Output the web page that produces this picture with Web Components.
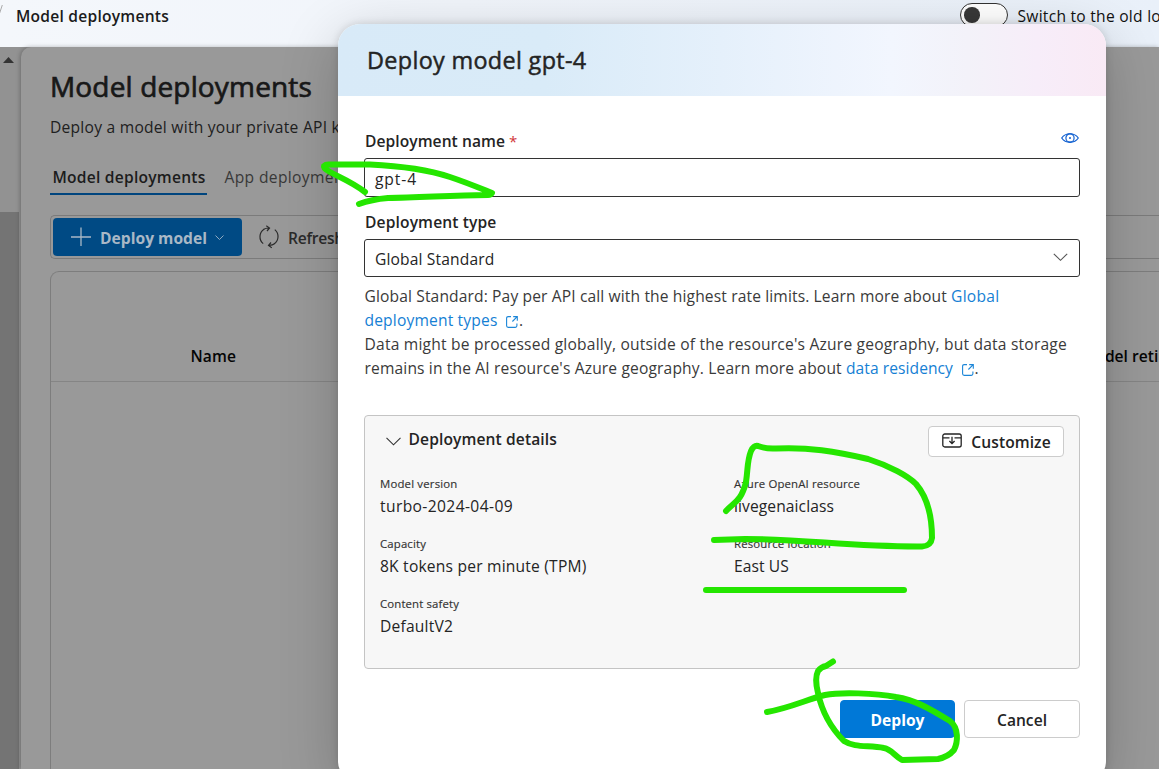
<!DOCTYPE html>
<html lang="en">
<head>
<meta charset="utf-8">
<title>Model deployments</title>
<style>
html,body{margin:0;height:100%;overflow:hidden}
body{font-family:"Open Sans","Noto Sans",sans-serif;font-size:15.6px;color:#242424}
</style>
</head>
<body>
<deployments-app></deployments-app>
<script>
function define(name, html, setup) {
  const t = document.createElement('template');
  t.innerHTML = html;
  customElements.define(name, class extends HTMLElement {
    constructor() {
      super();
      this.attachShadow({mode: 'open'}).append(t.content.cloneNode(true));
    }
    connectedCallback() { if (setup) setup(this, this.shadowRoot); }
  });
}

/* One line of text tracked to a given width. */
define('fit-text', `<style>
:host{display:inline-block;white-space:nowrap}
span{display:inline-block}
</style><span><slot></slot></span>`, (el, root) => {
  const s = root.querySelector('span');
  requestAnimationFrame(() => {
    s.style.letterSpacing = '0';
    const n = el.textContent.length, w = +el.getAttribute('w');
    const d = (w - s.getBoundingClientRect().width) / n;
    s.style.letterSpacing = d.toFixed(3) + 'px';
  });
});

define('ui-switch', `<style>
:host{display:block;box-sizing:border-box;width:48px;height:24px;border:1.3px solid #333;border-radius:12px;background:#fff;padding:3px}
i{display:block;width:15.5px;height:15.5px;border-radius:50%;background:#383838}
</style><i></i>`);

define('app-header', `<style>
:host{display:flex;height:47px;background:linear-gradient(90deg,#f4f7fb,#f1f5fb 40%,#e9f0f9);line-height:32px;color:#1b1b1b;overflow:hidden}
.c{width:16px}
.c svg{display:block;margin-top:5px}
.t{font-weight:600;flex:1}
ui-switch{margin:3px 9.500px 0 0}
.s{width:141.500px;color:#111}
</style>
<div class="c"><svg width="3" height="9" fill="none" stroke="#aaa"><path d="M2.300 0L-.5 8.500"/></svg></div><div class="t"><fit-text w="153">Model deployments</fit-text></div>
<ui-switch></ui-switch><div class="s"><fit-text w="143.500">Switch to the old lo</fit-text></div>`);

define('scroll-rail', `<style>
:host{display:flex;flex-direction:column;width:21px;background:#929292}
svg{display:block;margin:10px 0 0 3px;flex:none}
i{width:19px;margin-top:149px;background:#747474;flex:1}
</style><svg width="11" height="6"><path d="M0 6L5.5 0L11 6Z" fill="#333"/></svg><i></i>`);

define('page-tabs', `<style>
:host{display:flex;gap:18px;line-height:34px;height:35px;color:#383838}
.a{font-weight:600;color:#1c1c1c;width:152.500px;padding:0 2px;height:33px;border-bottom:2px solid #00457e;white-space:nowrap}
.a fit-text{margin-left:.5px}
</style><div class="a"><fit-text w="153">Model deployments</fit-text></div><fit-text w="133">App deployments</fit-text>`);

define('page-toolbar', `<style>
:host{display:flex;box-sizing:border-box;height:44px;border:1px solid #7b7b7b;border-right:0;border-radius:5px 0 0 5px;padding:2px;font-weight:600;line-height:40px;color:#2b2b2b}
.b{display:flex;box-sizing:border-box;width:189px;height:38px;background:#004a84;border-radius:4px;color:#a9b8c6;padding-left:18px;font-weight:700}
.b svg:first-child{margin:9px 9px 0 0}.b svg:last-child{margin:17px 0 0 8px}
.r{margin:7px 9px 0 17px}
</style>
<div class="b"><svg width="20" height="20" fill="none" stroke="#a9b8c6" stroke-width="1.3"><path d="M10 0.5V19M0 10H20"/></svg><fit-text w="107">Deploy model</fit-text><svg width="9" height="6" fill="none" stroke="#8fa9c0"><path d="M.5 .5L4.5 4.5L8.5 .5"/></svg></div>
<svg class="r" width="20" height="24" viewBox="0 0 20 24" fill="none" stroke="#2b2b2b" stroke-width="1.2"><path d="M5 4.2A9 9 0 0 0 4.2 18.6M15 19A9 9 0 0 0 15.8 4.6M4.500 4.500Q6.500 2.800 10.500 3M7.300 .8L10.500 3L8 6M15.500 18.700Q13.500 20.500 9.500 20.300M12 17.500L9.500 20.300L12.800 22.900"/></svg>
<fit-text w="56">Refresh</fit-text>`);

define('page-table', `<style>
:host{display:block;flex:1;box-sizing:border-box;border:1px solid #7d7d7d;border-width:1px 0 0 1px;border-radius:9px 0 0 0;margin-top:12px}
.h{display:flex;box-sizing:border-box;height:110px;border-bottom:1px solid #858585;padding:67px 0 0 139.500px;line-height:34px;font-weight:600;color:#050505}
.n{width:890.500px;flex:none}
</style><div class="h"><div class="n"><fit-text w="45.500">Name</fit-text></div><fit-text w="84">Model retir</fit-text></div>`);

define('page-panel', `<style>
:host{display:flex;flex:1;flex-direction:column;min-width:0;background:#999;border-radius:10px 0 0 0;padding:18px 0 0 29px;box-shadow:-1px 0 4px rgba(0,0,0,.25);overflow:hidden}
h1{font-weight:400;-webkit-text-stroke:.7px;font-size:28px;line-height:42px;margin:0;color:#181818}
p{margin:4px 0 17px;line-height:32px;color:#202020;height:32px}
page-toolbar{margin-top:20px}
</style><h1><fit-text w="262">Model deployments</fit-text></h1>
<p><fit-text w="290">Deploy a model with your private API k</fit-text></p>
<page-tabs></page-tabs><page-toolbar></page-toolbar><page-table></page-table>`);

define('ui-field', `<style>
:host{display:block}
.l{display:flex;justify-content:space-between;font-weight:600;line-height:34px;height:34px;padding-left:1px}
.b{display:flex;justify-content:space-between;box-sizing:border-box;height:var(--h,39px);line-height:var(--lh,41px);border:1px solid #333;border-radius:3px;padding:0 11px 0 10px}
</style><div class="l"><span><slot name="label"></slot></span><slot name="extra"></slot></div><div class="b"><slot></slot></div>`);

define('ui-button', `<style>
:host{display:flex;justify-content:center;box-sizing:border-box;border:1px solid #ccc;border-radius:4px;background:#fff;font-weight:600}
:host([primary]){background:#0078d7;border-color:#0078d7;color:#fff;font-weight:700}
</style><slot></slot>`);

define('ext-icon', `<style>:host{display:inline-block;vertical-align:-1.500px;width:12px;height:12px;margin:0 1px 0 8.500px}svg{display:block}</style>
<svg width="12" height="12" fill="none" stroke="#1c86d8" stroke-width="1.1"><path d="M5 .6H2.2Q.6 .6 .6 2.2V9.8Q.6 11.4 2.2 11.4H9.3Q10.9 11.4 10.9 9.8V7.5M7.2 .6H11.3V4.8M11.2 .7L6.4 5.5"/></svg>`);

define('detail-item', `<style>
:host{display:block;height:60px}
.k{font-size:11.4px;line-height:18px;height:18px;color:#333;-webkit-text-stroke:.15px}
.v{line-height:26px;height:26px}
</style><div class="k"><slot name="k"></slot></div><div class="v"><slot></slot></div>`);

define('deployment-details', `<style>
:host{display:block;box-sizing:border-box;height:254px;border:1px solid #c4c4c4;border-radius:4px;background:#f7f7f7;padding:10px 15px}
.h{display:flex;height:49px;line-height:26px;font-weight:600}
.h>svg{margin:11px 7.500px 0 6px}
ui-button{width:136px;height:31px;line-height:30px;margin-left:auto}
ui-button svg{margin:6px 9px 0 1px}
.g{display:grid;grid-template-columns:354px 1fr}
</style>
<div class="h"><svg width="15" height="9" fill="none" stroke="#333" stroke-width="1.1"><path d="M.5 .8L7.5 7.8L14.5 .8"/></svg><fit-text w="148.500">Deployment details</fit-text>
<ui-button><svg width="20" height="16" fill="none" stroke="#242424" stroke-width="1.3"><rect x=".8" y="1" width="18.4" height="13" rx="2"/><path d="M1 4.800H7.500M12.500 4.800H19M10 3.800V10.500M7.400 8L10 10.600L12.600 8"/></svg><fit-text w="79.500">Customize</fit-text></ui-button></div>
<div class="g">
<detail-item><fit-text slot="k" w="77.500">Model version</fit-text><fit-text w="133">turbo-2024-04-09</fit-text></detail-item>
<detail-item><fit-text slot="k" w="126">Azure OpenAI resource</fit-text><fit-text w="100">livegenaiclass</fit-text></detail-item>
<detail-item><fit-text slot="k" w="46">Capacity</fit-text><fit-text w="206.500">8K tokens per minute (TPM)</fit-text></detail-item>
<detail-item><fit-text slot="k" w="97">Resource location</fit-text><fit-text w="55">East US</fit-text></detail-item>
<detail-item><fit-text slot="k" w="79">Content safety</fit-text><fit-text w="73">DefaultV2</fit-text></detail-item>
</div>`);

define('deploy-dialog', `<style>
:host{display:block;box-sizing:border-box;width:768px;height:759px;border-radius:22px;background:#fff;overflow:hidden;box-shadow:0 0 8px rgba(0,0,0,.14),0 14px 60px rgba(0,0,0,.2)}
header{height:72px;box-sizing:border-box;padding:18px 29px;line-height:37px;font-size:23.4px;-webkit-text-stroke:.45px;background:linear-gradient(90deg,#d8eaf8 0,#d9ebf8 27%,#e5f0fb 50%,#f2f6fe 72%,#f3f2f9 82%,#f7edf9 91%,#f9eaf5)}
main{padding:28px 26px 0}
.red{color:#d13438;font-weight:400;margin-left:4px;font-size:15px}
.desc{padding-left:.5px;line-height:24px;height:96px;margin:7px 0 35px;color:#3a3a3a;white-space:nowrap}
.desc div{height:24px}
.desc fit-text{white-space:pre}
a{color:#1580d4}
.eye{margin:9px 1px 0 0}
.type{--h:38px;--lh:39px;margin-top:8px}
.chev{margin-top:13px}
footer{display:flex;justify-content:flex-end;gap:9px;margin-top:31px;line-height:38px}
footer ui-button{width:116px;height:38px}footer ui-button[primary]{width:115px}
</style>
<header><fit-text w="219.500">Deploy model gpt-4</fit-text></header>
<main>
<ui-field><span slot="label"><fit-text w="140">Deployment name</fit-text><span class="red">*</span></span>
<svg class="eye" slot="extra" width="18" height="10" viewBox="0 0 18 10" fill="none" stroke="#0f5fd0" stroke-width="1.2"><path d="M.7 5C4.5-.7 13.5-.7 17.3 5C13.5 10.7 4.5 10.7 .7 5Z"/><circle cx="9" cy="5" r="4.1"/><circle cx="9" cy="5" r="1" fill="#0f5fd0" stroke="none"/></svg>
<fit-text w="42">gpt-4</fit-text></ui-field>
<ui-field class="type"><fit-text slot="label" w="131.500">Deployment type</fit-text><fit-text w="119.500">Global Standard</fit-text><svg class="chev" width="15" height="9" fill="none" stroke="#555" stroke-width="1.1"><path d="M.8 .8L7.5 7.3L14.2 .8"/></svg></ui-field>
<div class="desc">
<div><fit-text w="586.500">Global Standard: Pay per API call with the highest rate limits. Learn more about </fit-text><a><fit-text w="48.500">Global</fit-text></a></div>
<div><a><fit-text w="133">deployment types</fit-text><ext-icon></ext-icon></a>.</div>
<div><fit-text w="702.500">Data might be processed globally, outside of the resource's Azure geography, but data storage</fit-text></div>
<div><fit-text w="481.500">remains in the AI resource's Azure geography. Learn more about </fit-text><a><fit-text w="107">data residency</fit-text><ext-icon></ext-icon></a>.</div>
</div>
<deployment-details></deployment-details>
<footer><ui-button primary><fit-text w="54">Deploy</fit-text></ui-button><ui-button><fit-text w="50">Cancel</fit-text></ui-button></footer>
</main>`);

define('ink-layer', `<style>:host{display:block;pointer-events:none}svg{display:block}</style>
<svg width="1159" height="769" fill="none" stroke="#25e600" stroke-width="6" stroke-linecap="round" stroke-linejoin="round">
<path d="M365 192C352 182 339 177 330 172Q323 168 324 166Q326 164 330 164.500L370 164.500C402 166 432 171 450 177C468 183 482 189 492 193Q491 195 488 195C450 195 420 198 388 198C376 199 367 201 359 204"/>
<path d="M726 511C734 502 741 502 746 482C748 469 747 461 751 451Q754 445 758 446C766 449 768 448.500 776 448.500C808 447 835 451 868 459C890 466 908 476 916 484C928 498 932 518 932 538Q931 546 922 546.500C850 547 807 539 745 539L714 540"/>
<path d="M706 590H904"/>
<path d="M767 712C790 708 808 699 825 695C840 692 875 693 896 697C916 700 932 710 950 721C959 728 958 742 954 750Q948 757 938 759L902 760C895 756 891 749 884 748C868 745 855 748 844 741C832 729 822 712 818 693C815 681 816 675 818 671Q821 667 826 666L833 661.500"/>
</svg>`);

define('deployments-app', `<style>
:host{position:relative;display:flex;flex-direction:column;height:769px;overflow:hidden}
.w{display:flex;flex:1;min-height:0;background:#929292}
deploy-dialog{position:absolute;left:338px;top:24px}
ink-layer{position:absolute;left:0;top:0}
</style><app-header></app-header><div class="w"><scroll-rail></scroll-rail><page-panel></page-panel></div>
<deploy-dialog></deploy-dialog><ink-layer></ink-layer>`);
</script>
</body>
</html>
